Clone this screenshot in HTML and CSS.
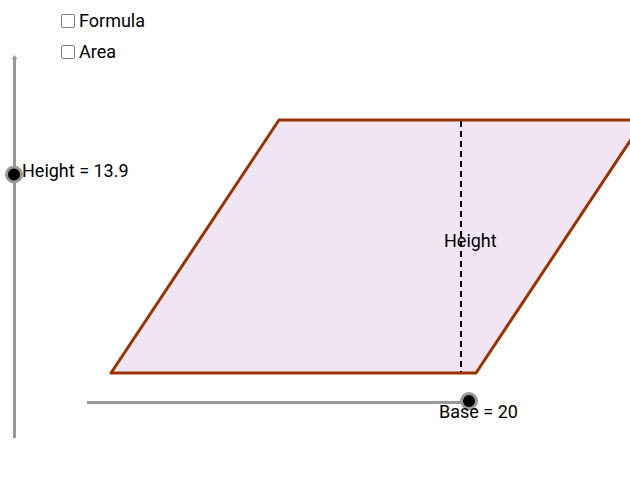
FILE: index.html
```html
<!DOCTYPE html>
<html>
<head>
<meta charset="utf-8">
<link rel="stylesheet" href="styles.css">
</head>
<body>
<div class="applet">
  <svg class="canvas" width="630" height="500" viewBox="0 0 630 500">
    <polygon class="para" points="111,373 476,373 644,120 279,120"/>
    <line class="dash" x1="461" y1="121" x2="461" y2="372"/>
    <text class="lbl" x="444" y="247">Height</text>
    <line class="axis" x1="14.5" y1="58" x2="14.5" y2="438"/>
    <path class="arrow" d="M11.5 59 L14.5 55 L17.5 59 Z"/>
    <line class="axis" x1="87" y1="402.5" x2="468" y2="402.5"/>
    <circle class="pt" cx="14" cy="174.5" r="7.5"/>
    <text class="lbl" x="22" y="177">Height = 13.9</text>
    <circle class="pt" cx="469" cy="401" r="7.5"/>
    <text class="lbl" x="439" y="418">Base = 20</text>
  </svg>
  <div class="checks">
    <label class="check"><span class="box"></span>Formula</label>
    <label class="check"><span class="box"></span>Area</label>
  </div>
</div>
</body>
</html>
```
FILE: styles.css
```css
html, body {
  margin: 0;
  padding: 0;
  background: #fff;
}
.applet {
  position: relative;
  width: 630px;
  height: 500px;
  overflow: hidden;
  font-family: Roboto, "Liberation Sans", sans-serif;
  font-size: 18px;
  color: #000;
}
.canvas {
  position: absolute;
  left: 0;
  top: 0;
}
.para {
  fill: #f1e5f4;
  stroke: #993300;
  stroke-width: 3;
  stroke-linejoin: round;
}
.dash {
  stroke: #000;
  stroke-width: 2;
  stroke-dasharray: 6 4;
}
.axis {
  stroke: #999;
  stroke-width: 3;
}
.arrow {
  fill: #999;
}
.pt {
  fill: #000;
  stroke: #999;
  stroke-width: 3;
}
.lbl {
  font-family: Roboto, "Liberation Sans", sans-serif;
  font-size: 18px;
  fill: #000;
}
.checks {
  position: relative;
  display: flex;
  flex-direction: column;
  gap: 10px;
  padding: 10px 0 0 61px;
}
.check {
  display: flex;
  align-items: center;
  gap: 4px;
  line-height: 21px;
  height: 21px;
}
.box {
  width: 12px;
  height: 12px;
  border: 1px solid #808080;
  border-radius: 2px;
  background: #fff;
}
```
